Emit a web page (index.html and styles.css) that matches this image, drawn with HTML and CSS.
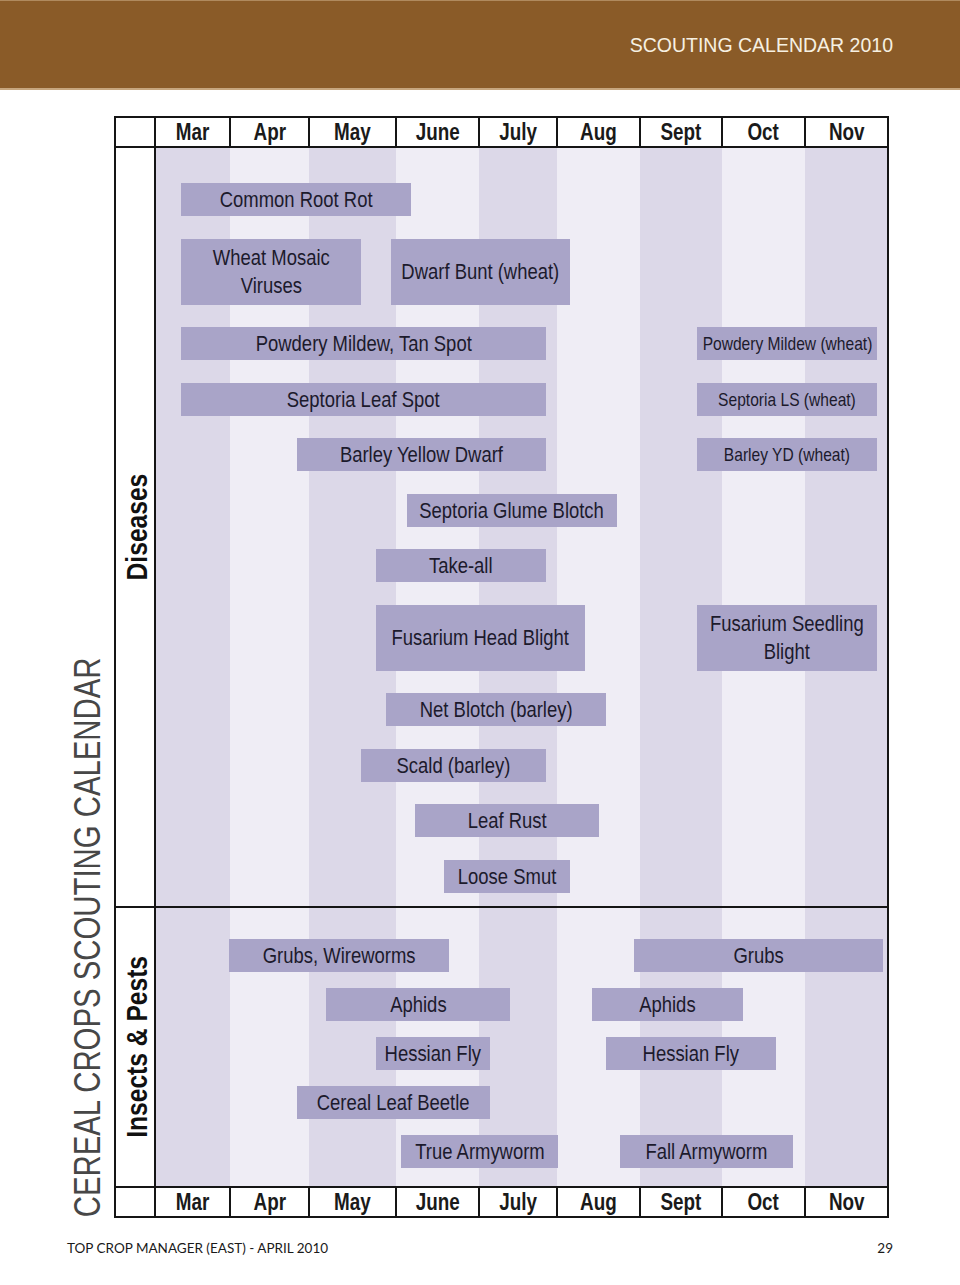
FILE: index.html
```html
<!DOCTYPE html>
<html lang="en">
<head>
<meta charset="utf-8">
<title>Scouting Calendar 2010</title>
<link rel="stylesheet" href="styles.css">
</head>
<body>
<div class="page">
  <header class="banner">
    <span class="banner-title">SCOUTING CALENDAR 2010</span>
  </header>

  <main class="spread">
    <div class="side-title"><span>CEREAL CROPS SCOUTING CALENDAR</span></div>

    <div class="calendar">
      <div class="corner"></div>
      <div class="month"><span>Mar</span></div>
      <div class="month"><span>Apr</span></div>
      <div class="month"><span>May</span></div>
      <div class="month"><span>June</span></div>
      <div class="month"><span>July</span></div>
      <div class="month"><span>Aug</span></div>
      <div class="month"><span>Sept</span></div>
      <div class="month"><span>Oct</span></div>
      <div class="month"><span>Nov</span></div>

      <div class="section-label"><span>Diseases</span></div>
      <div class="chart chart-diseases">
        <div class="row"><div class="bar" style="left:25px;width:230px"><span>Common Root Rot</span></div></div>
        <div class="row tall">
          <div class="bar" style="left:25px;width:180px"><span>Wheat Mosaic<br>Viruses</span></div>
          <div class="bar" style="left:235px;width:179px"><span>Dwarf Bunt (wheat)</span></div>
        </div>
        <div class="row">
          <div class="bar" style="left:25px;width:365px"><span>Powdery Mildew, Tan Spot</span></div>
          <div class="bar small" style="left:541px;width:180px"><span>Powdery Mildew (wheat)</span></div>
        </div>
        <div class="row">
          <div class="bar" style="left:25px;width:365px"><span>Septoria Leaf Spot</span></div>
          <div class="bar small" style="left:541px;width:180px"><span>Septoria LS (wheat)</span></div>
        </div>
        <div class="row">
          <div class="bar" style="left:141px;width:249px"><span>Barley Yellow Dwarf</span></div>
          <div class="bar small" style="left:541px;width:180px"><span>Barley YD (wheat)</span></div>
        </div>
        <div class="row"><div class="bar" style="left:251px;width:210px"><span>Septoria Glume Blotch</span></div></div>
        <div class="row"><div class="bar" style="left:220px;width:170px"><span>Take-all</span></div></div>
        <div class="row tall">
          <div class="bar" style="left:220px;width:209px"><span>Fusarium Head Blight</span></div>
          <div class="bar" style="left:541px;width:180px"><span>Fusarium Seedling<br>Blight</span></div>
        </div>
        <div class="row"><div class="bar" style="left:230px;width:220px"><span>Net Blotch (barley)</span></div></div>
        <div class="row"><div class="bar" style="left:205px;width:185px"><span>Scald (barley)</span></div></div>
        <div class="row"><div class="bar" style="left:259px;width:184px"><span>Leaf Rust</span></div></div>
        <div class="row"><div class="bar" style="left:288px;width:126px"><span>Loose Smut</span></div></div>
      </div>

      <div class="section-label"><span>Insects &amp; Pests</span></div>
      <div class="chart chart-insects">
        <div class="row">
          <div class="bar" style="left:73px;width:220px"><span>Grubs, Wireworms</span></div>
          <div class="bar" style="left:478px;width:249px"><span>Grubs</span></div>
        </div>
        <div class="row">
          <div class="bar" style="left:170px;width:184px"><span>Aphids</span></div>
          <div class="bar" style="left:436px;width:151px"><span>Aphids</span></div>
        </div>
        <div class="row">
          <div class="bar" style="left:220px;width:114px"><span>Hessian Fly</span></div>
          <div class="bar" style="left:450px;width:170px"><span>Hessian Fly</span></div>
        </div>
        <div class="row"><div class="bar" style="left:141px;width:193px"><span>Cereal Leaf Beetle</span></div></div>
        <div class="row">
          <div class="bar" style="left:245px;width:157px"><span>True Armyworm</span></div>
          <div class="bar" style="left:464px;width:173px"><span>Fall Armyworm</span></div>
        </div>
      </div>

      <div class="corner"></div>
      <div class="month"><span>Mar</span></div>
      <div class="month"><span>Apr</span></div>
      <div class="month"><span>May</span></div>
      <div class="month"><span>June</span></div>
      <div class="month"><span>July</span></div>
      <div class="month"><span>Aug</span></div>
      <div class="month"><span>Sept</span></div>
      <div class="month"><span>Oct</span></div>
      <div class="month"><span>Nov</span></div>
    </div>
  </main>

  <footer class="page-footer">
    <span>TOP CROP MANAGER (EAST) - APRIL 2010</span>
    <span>29</span>
  </footer>
</div>
</body>
</html>
```

FILE: styles.css
```css
* { box-sizing: border-box; }

html, body {
  margin: 0;
  padding: 0;
  background: #ffffff;
}

.page {
  width: 960px;
  height: 1285px;
  position: relative;
  overflow: hidden;
  font-family: "Liberation Sans", Arial, sans-serif;
  color: #1c1a28;
}

.banner {
  height: 90px;
  background: #8a5b28;
  border-top: 1px solid #b08a5e;
  border-bottom: 2px solid #c7a67e;
  display: flex;
  align-items: center;
  justify-content: flex-end;
  padding-right: 67px;
}

.banner-title {
  font-size: 19.5px;
  color: #f6f0e2;
  padding-top: 2px;
}

.spread {
  display: flex;
  align-items: flex-end;
  padding-top: 26px;
  padding-left: 70px;
}

.side-title {
  width: 44px;
  height: 1102px;
  display: flex;
  align-items: flex-end;
  justify-content: flex-start;
}

.side-title span {
  writing-mode: vertical-rl;
  transform: rotate(180deg) scaleY(0.815);
  font-size: 36px;
  line-height: 36px;
  color: #474747;
  white-space: nowrap;
  margin-bottom: -63px;
}

.calendar {
  display: grid;
  grid-template-columns: 38px 73px 77px 85px 81px 76px 81px 80px 81px 81px;
  grid-template-rows: 28px 758px 278px 28px;
  gap: 2px;
  padding: 2px;
  background: #151515;
}

.corner,
.month {
  background: #ffffff;
}

.month {
  display: flex;
  align-items: center;
  justify-content: center;
  font-weight: bold;
  font-size: 23px;
  color: #1a1a1a;
  padding-top: 1px;
}

.month span {
  display: inline-block;
  transform: scaleX(0.82);
  white-space: nowrap;
}

.section-label {
  background: #ffffff;
  display: flex;
  align-items: center;
  justify-content: center;
}

.section-label span {
  writing-mode: vertical-rl;
  transform: rotate(180deg) scaleY(0.82);
  font-weight: bold;
  font-size: 30px;
  line-height: 1;
  color: #111111;
  white-space: nowrap;
  margin-left: 4px;
}

.chart {
  grid-column: 2 / span 9;
  display: flex;
  flex-direction: column;
  background: linear-gradient(to right,
    #dcd8e8 0, #dcd8e8 74px,
    #efedf5 74px, #efedf5 153px,
    #dcd8e8 153px, #dcd8e8 240px,
    #efedf5 240px, #efedf5 323px,
    #dcd8e8 323px, #dcd8e8 401px,
    #efedf5 401px, #efedf5 484px,
    #dcd8e8 484px, #dcd8e8 566px,
    #efedf5 566px, #efedf5 649px,
    #dcd8e8 649px, #dcd8e8 100%);
}

.chart-diseases {
  padding-top: 35px;
  gap: 22.5px;
}

.chart-insects {
  padding-top: 31px;
  gap: 16px;
}

.row {
  position: relative;
  height: 33px;
}

.row.tall {
  height: 66px;
}

.bar {
  position: absolute;
  top: 0;
  height: 100%;
  background: #a9a4c8;
  display: flex;
  align-items: center;
  justify-content: center;
  text-align: center;
  font-size: 22.5px;
  line-height: 28px;
  color: #1c1a2c;
  white-space: nowrap;
  padding-top: 1px;
}

.bar span {
  display: inline-block;
  transform: scaleX(0.82);
}

.bar.small {
  font-size: 19px;
}

.page-footer {
  position: absolute;
  left: 67px;
  right: 67px;
  top: 1240px;
  display: flex;
  justify-content: space-between;
  font-family: "Lato", "Liberation Sans", sans-serif;
  font-size: 13.5px;
  color: #1a1a1a;
}
```
